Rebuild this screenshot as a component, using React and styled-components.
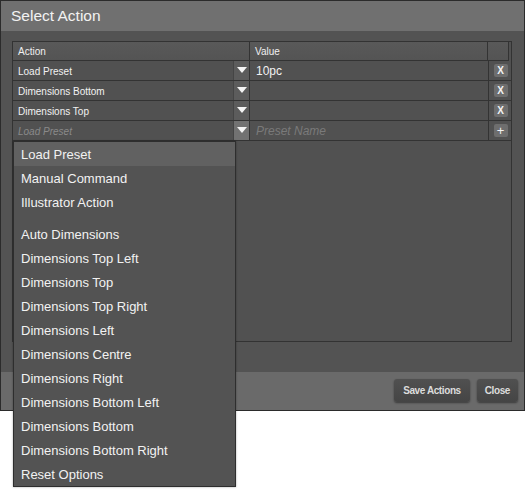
import React from "react";
import styled, { createGlobalStyle } from "styled-components";

const Global = createGlobalStyle`
  html, body { margin: 0; padding: 0; background: #ffffff; }
  body { font-family: Tahoma, "Liberation Sans", "DejaVu Sans", sans-serif; }
  #root { min-height: 490px; }
  * { box-sizing: border-box; }
`;

const Page = styled.div`
  width: 526px;
  height: 490px;
  position: relative;
`;

const Dialog = styled.div`
  width: 525px;
  height: 411px;
  border: 1px solid #2b2b2b;
  background: #535353;
  display: flex;
  flex-direction: column;
`;

const TitleBar = styled.div`
  height: 30px;
  flex: none;
  background: #707070;
  color: #f2f2f2;
  font-family: "Liberation Sans", sans-serif;
  font-size: 15.5px;
  padding-left: 10px;
  display: flex;
  align-items: center;
  padding-bottom: 1px;
`;

const Body = styled.div`
  flex: 1;
  padding: 10px 12px 30px 11px;
  display: flex;
`;

const Table = styled.div`
  position: relative;
  flex: 1;
  border: 1px solid #333;
  background: #515151;
  display: flex;
  flex-direction: column;
`;

const HeaderRow = styled.div`
  display: flex;
  height: 19px;
  margin-right: 2px;
  background: linear-gradient(#595959, #545454);
  border-bottom: 1px solid #333;
  border-right: 1px solid #333;
`;

const HeadCell = styled.div`
  width: ${p => p.$w ? p.$w + "px" : "auto"};
  flex: ${p => p.$w ? "none" : 1};
  border-right: ${p => p.$last ? "none" : "1px solid #333"};
  color: #f0f0f0;
  font-family: "Liberation Sans", sans-serif;
  font-size: 10px;
  padding-left: 5px;
  padding-top: 1px;
  display: flex;
  align-items: center;
`;

const Row = styled.div`
  display: flex;
  height: 20px;
  border-bottom: 1px solid #333;
`;

const ActionCell = styled.div`
  position: relative;
  width: 237px;
  flex: none;
  display: flex;
  border-right: 1px solid #333;
`;

const ActionText = styled.div`
  flex: 1;
  padding-left: 5px;
  padding-top: 1px;
  display: flex;
  align-items: center;
  font-family: "Liberation Sans", sans-serif;
  font-size: 10px;
  color: ${p => p.$placeholder ? "#8a8a8a" : "#f2f2f2"};
  font-style: ${p => p.$placeholder ? "italic" : "normal"};
`;

const DropButton = styled.div`
  width: 16px;
  flex: none;
  background: ${p => p.$hot ? "#727272" : "#5c5c5c"};
  border-left: 1px solid #454545;
  display: flex;
  align-items: center;
  justify-content: center;
`;

const Triangle = styled.div`
  width: 0;
  height: 0;
  border-left: 5px solid transparent;
  border-right: 5px solid transparent;
  border-top: 6px solid #f4f4f4;
  margin-top: -2px;
`;

const ValueCell = styled.div`
  flex: 1;
  display: flex;
  align-items: center;
  padding-left: 6px;
  padding-top: 1px;
  font-family: "Liberation Sans", sans-serif;
  font-size: 12px;
  color: ${p => p.$placeholder ? "#7a7a7a" : "#f2f2f2"};
  font-style: ${p => p.$placeholder ? "italic" : "normal"};
  border-right: 1px solid #333;
`;

const XCell = styled.div`
  width: 22px;
  flex: none;
  display: flex;
  align-items: center;
  justify-content: center;
`;

const SmallButton = styled.div`
  width: 14px;
  height: 13px;
  border-radius: 2px;
  background: #6e6e6e;
  color: #f4f4f4;
  font-family: "Liberation Sans", sans-serif;
  font-size: ${p => p.$plus ? "13px" : "10px"};
  font-weight: ${p => p.$plus ? "normal" : "bold"};
  line-height: 13px;
  text-align: center;
  margin-left: 1px;
`;

const Menu = styled.div`
  position: absolute;
  top: 20px;
  left: 0px;
  width: 223px;
  background: #535353;
  border: 1px solid #2e2e2e;
  box-shadow: 0 0 2px rgba(0, 0, 0, 0.35);
  z-index: 5;
  display: flex;
  flex-direction: column;
`;

const MenuItem = styled.div`
  height: 24px;
  flex: none;
  display: flex;
  align-items: center;
  padding-left: 7px;
  padding-top: 1px;
  font-family: "Liberation Sans", sans-serif;
  font-size: 13px;
  color: #f2f2f2;
  background: ${p => p.$active ? "#616161" : "transparent"};
`;

const MenuGap = styled.div`
  height: 8px;
  flex: none;
`;

const Footer = styled.div`
  height: 38px;
  flex: none;
  background: #6a6a6a;
  display: flex;
  justify-content: flex-end;
  align-items: center;
  gap: 7px;
  padding-right: 6px;
  padding-bottom: 1px;
`;

const FooterButton = styled.div`
  height: 23px;
  padding: 0 ${p => p.$pad}px;
  border-radius: 3px;
  background: linear-gradient(#505050, #454545);
  box-shadow: 0 1px 2px rgba(0, 0, 0, 0.45);
  color: #dcdcdc;
  font-family: "Liberation Sans", sans-serif;
  font-size: 10px;
  font-weight: bold;
  letter-spacing: -0.4px;
  display: flex;
  align-items: center;
`;

const rows = [
  { action: "Load Preset", value: "10pc" },
  { action: "Dimensions Bottom", value: "" },
  { action: "Dimensions Top", value: "" },
];

const menuGroups = [
  ["Load Preset", "Manual Command", "Illustrator Action"],
  [
    "Auto Dimensions",
    "Dimensions Top Left",
    "Dimensions Top",
    "Dimensions Top Right",
    "Dimensions Left",
    "Dimensions Centre",
    "Dimensions Right",
    "Dimensions Bottom Left",
    "Dimensions Bottom",
    "Dimensions Bottom Right",
    "Reset Options",
  ],
];

export default function App() {
  return (
    <>
      <Global />
      <Page>
        <Dialog>
          <TitleBar>Select Action</TitleBar>
          <Body>
            <Table>
              <HeaderRow>
                <HeadCell $w={237}>Action</HeadCell>
                <HeadCell>Value</HeadCell>
                <HeadCell $w={20} $last />
              </HeaderRow>
              {rows.map((r, i) => (
                <Row key={i}>
                  <ActionCell>
                    <ActionText>{r.action}</ActionText>
                    <DropButton><Triangle /></DropButton>
                  </ActionCell>
                  <ValueCell>{r.value}</ValueCell>
                  <XCell><SmallButton>X</SmallButton></XCell>
                </Row>
              ))}
              <Row>
                <ActionCell>
                  <ActionText $placeholder>Load Preset</ActionText>
                  <DropButton $hot><Triangle /></DropButton>
                  <Menu>
                    {menuGroups.map((g, gi) => (
                      <React.Fragment key={gi}>
                        {gi > 0 && <MenuGap />}
                        {g.map((item, ii) => (
                          <MenuItem key={item} $active={gi === 0 && ii === 0}>{item}</MenuItem>
                        ))}
                      </React.Fragment>
                    ))}
                  </Menu>
                </ActionCell>
                <ValueCell $placeholder>Preset Name</ValueCell>
                <XCell><SmallButton $plus>+</SmallButton></XCell>
              </Row>
            </Table>
          </Body>
          <Footer>
            <FooterButton $pad={9}>Save Actions</FooterButton>
            <FooterButton $pad={8}>Close</FooterButton>
          </Footer>
        </Dialog>
      </Page>
    </>
  );
}
